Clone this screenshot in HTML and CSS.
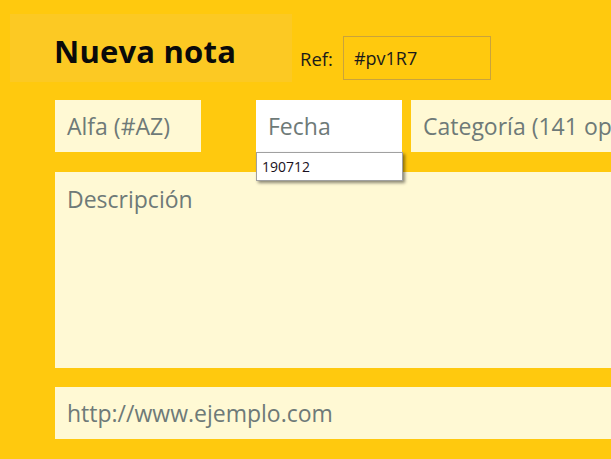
FILE: index.html
```html
<!DOCTYPE html>
<html lang="es">
<head>
<meta charset="utf-8">
<title>Nueva nota</title>
<link rel="stylesheet" href="styles.css">
</head>
<body>
<div class="page">
  <header class="head">
    <div class="title-block"><h1>Nueva nota</h1></div>
    <div class="ref">
      <span class="ref-label">Ref:</span>
      <div class="ref-box">#pv1R7</div>
    </div>
  </header>
  <main class="form">
    <div class="row">
      <div class="field alfa">Alfa (#AZ)</div>
      <div class="date-wrap">
        <div class="field fecha">Fecha</div>
        <div class="suggest">190712</div>
      </div>
      <div class="field cat">Categoría (141 opciones)</div>
    </div>
    <div class="field desc">Descripción</div>
    <div class="field url">http://www.ejemplo.com</div>
  </main>
</div>
</body>
</html>
```

FILE: styles.css
```css
html, body {
  margin: 0;
  padding: 0;
  background: #ffc90e;
  overflow: hidden;
  width: 611px;
  height: 459px;
}
.page {
  font-family: "Open Sans", "Noto Sans", sans-serif;
  width: 800px;
}
.head {
  display: flex;
  align-items: flex-end;
  padding: 14px 0 0 10px;
}
.title-block {
  width: 282px;
  height: 68px;
  background: #fcc923;
  display: flex;
  align-items: center;
  box-sizing: border-box;
  padding-left: 44px;
  padding-top: 6px;
}
.title-block h1 {
  margin: 0;
  font-size: 31px;
  font-weight: 700;
  color: #0a0a0a;
  letter-spacing: 0.2px;
}
.ref {
  display: flex;
  align-items: center;
  margin-left: 8px;
  margin-bottom: 2px;
}
.ref-label {
  font-size: 18.5px;
  color: #1a1a1a;
}
.ref-box {
  margin-left: 10px;
  width: 148px;
  height: 44px;
  box-sizing: border-box;
  border: 1px solid #c9a33c;
  font-size: 18px;
  color: #1a1a1a;
  display: flex;
  align-items: center;
  padding-left: 10px;
}
.form {
  padding: 18px 0 0 55px;
  display: flex;
  flex-direction: column;
  gap: 19px;
}
.row {
  display: flex;
  gap: 9px;
}
.field {
  background: #fff9d4;
  color: #6e7a78;
  font-size: 23px;
  box-sizing: border-box;
  padding-left: 12px;
  height: 52px;
  display: flex;
  align-items: center;
  white-space: nowrap;
}
.alfa {
  width: 146px;
  margin-right: 46px;
}
.date-wrap {
  position: relative;
}
.fecha {
  width: 146px;
  background: #ffffff;
}
.suggest {
  position: absolute;
  left: 0;
  top: 52px;
  width: 147px;
  height: 29px;
  box-sizing: border-box;
  background: #fff;
  border: 1px solid #a0a0a0;
  box-shadow: 2px 2px 3px rgba(0, 0, 0, 0.45);
  font-family: "Open Sans", sans-serif;
  font-size: 14px;
  font-weight: 500;
  color: #1a1020;
  padding-left: 5px;
  display: flex;
  align-items: center;
}
.cat {
  width: 320px;
}
.desc {
  margin-top: 1px;
  width: 700px;
  height: 196px;
  align-items: flex-start;
  padding-top: 11px;
}
.url {
  width: 700px;
}
```
